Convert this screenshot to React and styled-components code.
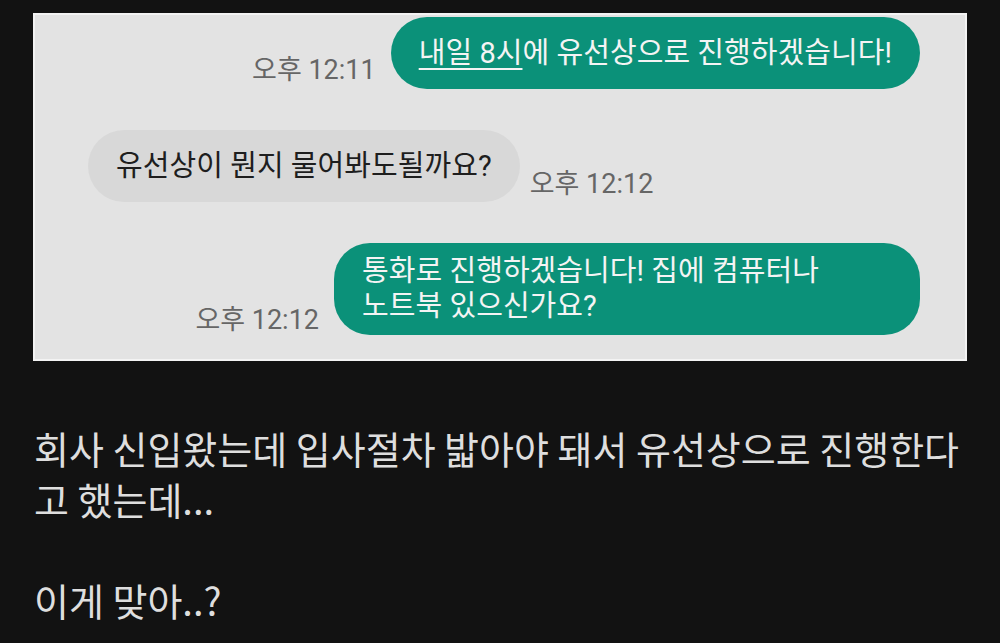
import styled, { createGlobalStyle } from "styled-components";

const GlobalStyle = createGlobalStyle`
  body {
    margin: 0;
    background: #121212;
    font-family: Roboto, "Noto Sans CJK KR", sans-serif;
  }
`;

const Page = styled.div`
  width: 1000px;
  height: 643px;
  background: #121212;
  overflow: hidden;
  padding: 13px 0 0 33px;
  box-sizing: border-box;
`;

const Shot = styled.div`
  width: 934px;
  height: 348px;
  box-sizing: border-box;
  background: #e3e3e3;
  border: 2px solid #f3f3f3;
  padding: 2px 45px 0 53px;
  display: flex;
  flex-direction: column;
  gap: 41px;
`;

const Row = styled.div`
  display: flex;
  align-items: flex-end;
  justify-content: ${(p) => (p.$mine ? "flex-end" : "flex-start")};
  gap: ${(p) => (p.$mine ? "15px" : "10px")};
`;

const Bubble = styled.div`
  box-sizing: border-box;
  min-height: 72px;
  width: ${(p) => p.$width || "auto"};
  display: flex;
  align-items: center;
  padding: 11px 28px;
  border-radius: 36px;
  background: ${(p) => (p.$mine ? "#0b9179" : "#d8d8d8")};
  color: ${(p) => (p.$mine ? "#f4f4f4" : "#1e1e1e")};
  font-size: 29px;
  letter-spacing: 0.05px;
  line-height: 35px;
  white-space: nowrap;
`;

const Link = styled.span`
  text-decoration: underline;
  text-decoration-thickness: 2px;
  text-underline-offset: 5px;
`;

const Time = styled.div`
  font-size: 27px;
  line-height: 30px;
  color: #666;
  margin-bottom: ${(p) => p.$mb || "4px"};
  white-space: nowrap;
`;

const Post = styled.div`
  margin-top: 62px;
  padding-left: 1px;
  color: #dedede;
  font-family: "Noto Sans CJK KR", sans-serif;
  font-size: 38px;
  line-height: 50.5px;
`;

export default function App() {
  return (
    <>
      <GlobalStyle />
      <Page>
        <Shot>
          <Row $mine>
            <Time>오후 12:11</Time>
            <Bubble $mine>
              <span>
                <Link>내일 8시</Link>에 유선상으로 진행하겠습니다!
              </span>
            </Bubble>
          </Row>
          <Row>
            <Bubble>유선상이 뭔지 물어봐도될까요?</Bubble>
            <Time $mb="3px">오후 12:12</Time>
          </Row>
          <Row $mine>
            <Time $mb="0px">오후 12:12</Time>
            <Bubble $mine $width="586px">
              <span>
                통화로 진행하겠습니다! 집에 컴퓨터나
                <br />
                노트북 있으신가요?
              </span>
            </Bubble>
          </Row>
        </Shot>
        <Post>
          회사 신입왔는데 입사절차 밟아야 돼서 유선상으로 진행한다
          <br />
          고 했는데...
          <br />
          <br />
          이게 맞아..?
        </Post>
      </Page>
    </>
  );
}
